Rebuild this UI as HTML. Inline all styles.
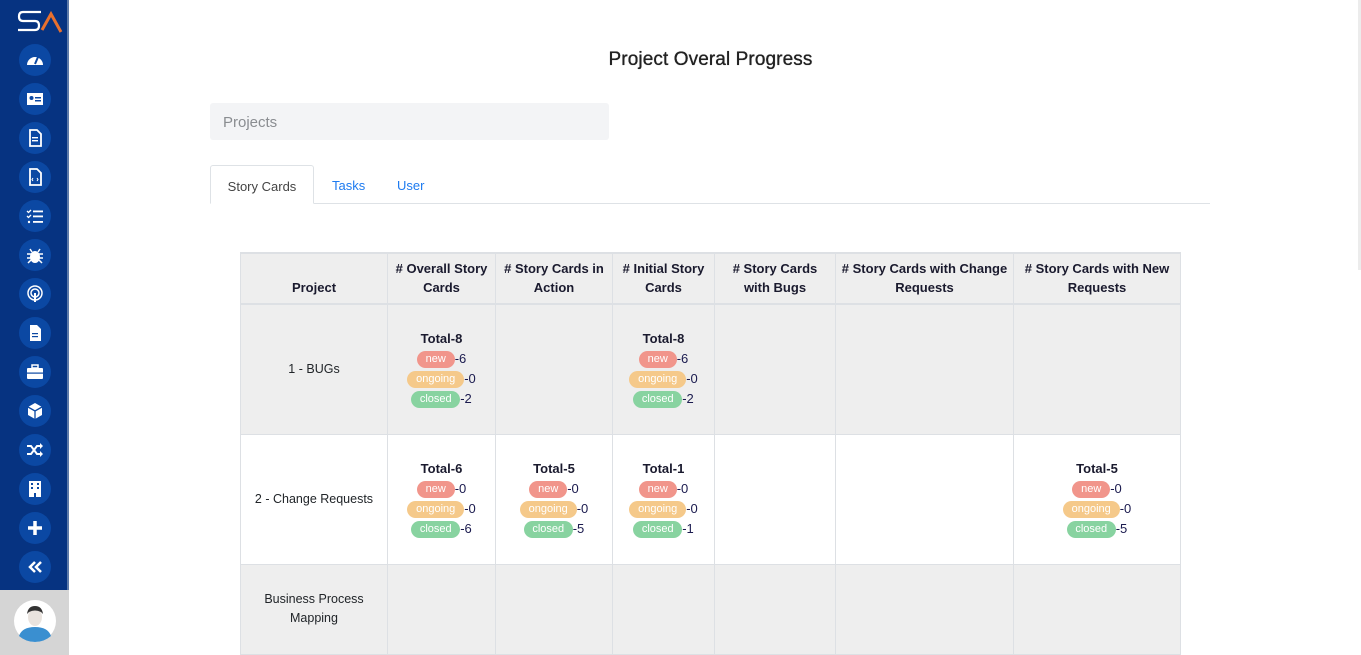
<!DOCTYPE html>
<html><head><meta charset="utf-8"><style>
*{box-sizing:border-box;margin:0;padding:0}
html,body{width:1361px;height:655px;overflow:hidden}
body{background:#fff;font-family:"Liberation Sans",sans-serif;color:#212529;position:relative}
.sb{position:absolute;left:0;top:0;width:69px;height:655px;background:#063381;border-right:2px solid #5d7aa8}
.ic{position:absolute;left:19px;width:32px;height:32px;border-radius:50%;background:#0b48a3;display:flex;align-items:center;justify-content:center}
.ic svg{width:18px;height:18px}
.av{position:absolute;left:0;top:590px;width:69px;height:65px;background:#d5d5d5}
h1{position:absolute;left:0;width:1421px;text-align:center;top:49px;font-size:19px;font-weight:normal;color:#222;text-shadow:0 0 0.6px #222,0 0 0 #222;letter-spacing:.1px}
.sel{position:absolute;left:210px;top:103px;width:399px;height:37px;background:#f3f4f6;border-radius:3px;color:#8a8d91;font-size:15px;padding:11px 13px}
.tabs{position:absolute;left:210px;top:203px;width:1000px;border-top:1px solid #dee2e6}
.tab{position:absolute;top:165px;height:39px;font-size:13px;padding-top:13px}
table{position:absolute;left:240px;top:252px;border-collapse:collapse;table-layout:fixed;width:940px;font-size:12.5px}
td,th{border:1px solid #dde0e4;text-align:center;vertical-align:middle}
th{background:#eee;height:51px;font-weight:bold;vertical-align:bottom;padding:0 4px 6px;line-height:19px;border-bottom:2px solid #dde0e4;border-top:2px solid #dde0e4;font-size:13px;color:#1a1a2e}
tr.g td{background:#eee}
tr.r td{height:130px;line-height:19px}
tr.s td{height:90px;line-height:19px}
.t{font-weight:bold;font-size:13px;color:#1a1a2e;line-height:20px;height:20px}
.l{line-height:20px;height:20px;color:#1a1a4e;font-size:13px;display:flex;justify-content:center;align-items:center}
.b{display:inline-block;height:17px;line-height:17px;border-radius:9px;color:#fff;font-size:11px}
.n{background:#f1958b;width:38px}.o{background:#f5c98a;width:57px}.c{background:#88d3a0;width:49px}
</style></head><body>
<div class="sb">
<svg style="position:absolute;left:17px;top:8px" width="46" height="28" viewBox="0 0 46 28"><path d="M24 4H6Q2 4 2 8.5Q2 13 6 13H18Q22 13 22 17.5Q22 22 18 22H1" fill="none" stroke="#fff" stroke-width="2.2"/><path d="M25 22L34 6L44 24" fill="none" stroke="#e8702e" stroke-width="3"/></svg>
<div class="ic" style="top:44px"><svg viewBox="0 0 18 18"><path d="M1 14A8 8 0 0 1 17 14Z" fill="#fff"/><path d="M9 13L12 6" stroke="#0b48a3" stroke-width="2"/></svg></div>
<div class="ic" style="top:83px"><svg viewBox="0 0 18 18"><rect x="1" y="3" width="16" height="12" fill="#fff"/><circle cx="5.5" cy="8" r="2" fill="#0b48a3"/><rect x="9" y="7" width="6" height="1.5" fill="#0b48a3"/><rect x="9" y="10" width="6" height="1.5" fill="#0b48a3"/></svg></div>
<div class="ic" style="top:122px"><svg viewBox="0 0 18 18"><path d="M4 1H11L15 5V17H4Z" fill="none" stroke="#fff" stroke-width="1.8"/><rect x="6" y="8" width="6" height="1.4" fill="#fff"/><rect x="6" y="11" width="6" height="1.4" fill="#fff"/></svg></div>
<div class="ic" style="top:161px"><svg viewBox="0 0 18 18"><path d="M4 1H11L15 5V17H4Z" fill="none" stroke="#fff" stroke-width="1.8"/><path d="M7 10L6 11.5L7 13M11 10L12 11.5L11 13" stroke="#fff" fill="none"/></svg></div>
<div class="ic" style="top:200px"><svg viewBox="0 0 18 18"><path d="M1 4L2.5 5.5L5 3M1 9L2.5 10.5L5 8" stroke="#fff" fill="none" stroke-width="1.3"/><circle cx="3" cy="15" r="1.2" fill="#fff"/><rect x="7" y="3.5" width="10" height="1.8" fill="#fff"/><rect x="7" y="8.5" width="10" height="1.8" fill="#fff"/><rect x="7" y="14" width="10" height="1.8" fill="#fff"/></svg></div>
<div class="ic" style="top:239px"><svg viewBox="0 0 18 18"><ellipse cx="9" cy="11" rx="5" ry="6" fill="#fff"/><path d="M1 8H17M1 12H17M2 17L5 14M16 17L13 14M4 3L6 6M14 3L12 6" stroke="#fff" stroke-width="1.5"/></svg></div>
<div class="ic" style="top:278px"><svg viewBox="0 0 18 18"><circle cx="9" cy="8" r="7" fill="none" stroke="#fff" stroke-width="1.5"/><circle cx="9" cy="8" r="4" fill="none" stroke="#fff" stroke-width="1.5"/><rect x="8" y="8" width="2" height="9" fill="#fff"/></svg></div>
<div class="ic" style="top:317px"><svg viewBox="0 0 18 18"><path d="M4 1H11L15 5V17H4Z" fill="#fff"/><rect x="6" y="9" width="6" height="1.2" fill="#0b48a3"/><rect x="6" y="12" width="6" height="1.2" fill="#0b48a3"/></svg></div>
<div class="ic" style="top:356px"><svg viewBox="0 0 18 18"><rect x="1" y="5" width="16" height="11" rx="1" fill="#fff"/><rect x="6" y="2" width="6" height="3" fill="none" stroke="#fff" stroke-width="1.5"/><rect x="1" y="9.5" width="16" height="1.2" fill="#0b48a3"/></svg></div>
<div class="ic" style="top:395px"><svg viewBox="0 0 18 18"><path d="M9 1L16 5V13L9 17L2 13V5Z" fill="#fff"/><path d="M2 5L9 9L16 5M9 9V17" stroke="#0b48a3" stroke-width="1.3" fill="none"/></svg></div>
<div class="ic" style="top:434px"><svg viewBox="0 0 18 18"><path d="M1 5H5L11 13H16M1 13H5L11 5H16" stroke="#fff" stroke-width="2" fill="none"/><path d="M14 2L17 5L14 8ZM14 10L17 13L14 16Z" fill="#fff"/></svg></div>
<div class="ic" style="top:473px"><svg viewBox="0 0 18 18"><rect x="3" y="1" width="12" height="16" fill="#fff"/><g fill="#0b48a3"><rect x="5" y="3" width="2" height="2"/><rect x="11" y="3" width="2" height="2"/><rect x="5" y="7" width="2" height="2"/><rect x="11" y="7" width="2" height="2"/><rect x="8" y="13" width="2" height="4"/></g></svg></div>
<div class="ic" style="top:512px"><svg viewBox="0 0 18 18"><path d="M9 2V16M2 9H16" stroke="#fff" stroke-width="3.5"/></svg></div>
<div class="ic" style="top:551px"><svg viewBox="0 0 18 18"><path d="M9 4L4 9L9 14M15 4L10 9L15 14" stroke="#fff" stroke-width="2.5" fill="none"/></svg></div>
<div class="av"><svg style="position:absolute;left:14px;top:10px" width="42" height="42" viewBox="0 0 42 42"><circle cx="21" cy="21" r="21" fill="#fff"/><path d="M5 36Q8 27 21 27Q34 27 37 36Q30 42 21 42Q12 42 5 36Z" fill="#3a8fd0"/><ellipse cx="21" cy="17" rx="7" ry="9" fill="#e9e3de"/><path d="M13 14Q14 6 21 6Q28 6 29 14L27 12Q21 9 15 12Z" fill="#333"/></svg></div>
</div>
<div style="position:absolute;left:1358px;top:0;width:3px;height:270px;background:#ececec"></div>
<h1>Project Overal Progress</h1>
<div class="sel">Projects</div>
<div class="tabs"></div>
<div class="tab" style="left:210px;width:104px;border:1px solid #dee2e6;border-bottom:1px solid #fff;border-radius:3px 3px 0 0;background:#fff;text-align:center;color:#444">Story Cards</div>
<div class="tab" style="left:332px;color:#1e7bf0">Tasks</div>
<div class="tab" style="left:397px;color:#1e7bf0">User</div>
<table>
<colgroup><col style="width:147px"><col style="width:108px"><col style="width:117px"><col style="width:102px"><col style="width:121px"><col style="width:178px"><col style="width:167px"></colgroup>
<tr><th>Project</th><th># Overall Story Cards</th><th># Story Cards in Action</th><th># Initial Story Cards</th><th># Story Cards with Bugs</th><th># Story Cards with Change Requests</th><th># Story Cards with New Requests</th></tr>
<tr class="g r"><td>1 - BUGs</td>
<td><div class="t">Total-8</div><div class="l"><span class="b n">new</span>-6</div><div class="l"><span class="b o">ongoing</span>-0</div><div class="l"><span class="b c">closed</span>-2</div></td>
<td></td>
<td><div class="t">Total-8</div><div class="l"><span class="b n">new</span>-6</div><div class="l"><span class="b o">ongoing</span>-0</div><div class="l"><span class="b c">closed</span>-2</div></td>
<td></td><td></td><td></td></tr>
<tr class="r"><td>2 - Change Requests</td>
<td><div class="t">Total-6</div><div class="l"><span class="b n">new</span>-0</div><div class="l"><span class="b o">ongoing</span>-0</div><div class="l"><span class="b c">closed</span>-6</div></td>
<td><div class="t">Total-5</div><div class="l"><span class="b n">new</span>-0</div><div class="l"><span class="b o">ongoing</span>-0</div><div class="l"><span class="b c">closed</span>-5</div></td>
<td><div class="t">Total-1</div><div class="l"><span class="b n">new</span>-0</div><div class="l"><span class="b o">ongoing</span>-0</div><div class="l"><span class="b c">closed</span>-1</div></td>
<td></td><td></td>
<td><div class="t">Total-5</div><div class="l"><span class="b n">new</span>-0</div><div class="l"><span class="b o">ongoing</span>-0</div><div class="l"><span class="b c">closed</span>-5</div></td></tr>
<tr class="g s"><td>Business Process<br>Mapping</td><td></td><td></td><td></td><td></td><td></td><td></td></tr>
</table>
</body></html>
